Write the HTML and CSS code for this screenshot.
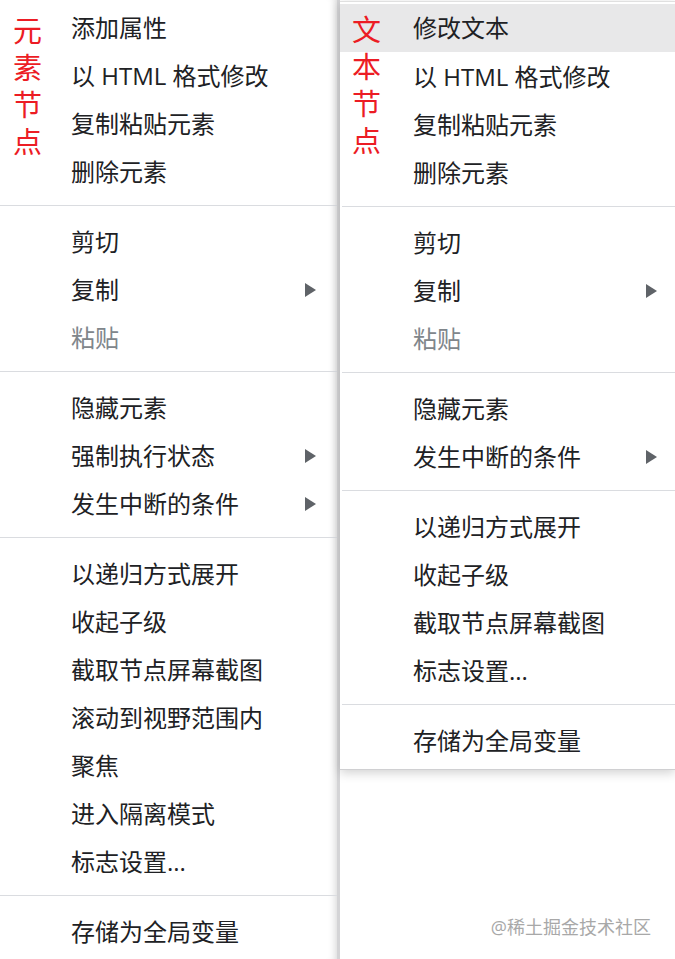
FILE: index.html
```html
<!DOCTYPE html>
<html lang="zh-CN">
<head>
    <meta charset="UTF-8">
    <title>右键菜单对比</title>
    <link rel="stylesheet" href="styles.css">
</head>
<body>
    <div class="page">
        <div class="panel left">
            <div class="note">元<br>素<br>节<br>点</div>
            <ul class="menu">
                <li class="item">添加属性</li>
                <li class="item">以 HTML 格式修改</li>
                <li class="item">复制粘贴元素</li>
                <li class="item">删除元素</li>
                <li class="sep"></li>
                <li class="item">剪切</li>
                <li class="item sub">复制</li>
                <li class="item off">粘贴</li>
                <li class="sep"></li>
                <li class="item">隐藏元素</li>
                <li class="item sub">强制执行状态</li>
                <li class="item sub">发生中断的条件</li>
                <li class="sep"></li>
                <li class="item">以递归方式展开</li>
                <li class="item">收起子级</li>
                <li class="item">截取节点屏幕截图</li>
                <li class="item">滚动到视野范围内</li>
                <li class="item">聚焦</li>
                <li class="item">进入隔离模式</li>
                <li class="item">标志设置...</li>
                <li class="sep"></li>
                <li class="item">存储为全局变量</li>
            </ul>
        </div>

        <div class="panel right">
            <div class="popup">
                <div class="note">文<br>本<br>节<br>点</div>
                <ul class="menu">
                    <li class="item hover">修改文本</li>
                    <li class="item">以 HTML 格式修改</li>
                    <li class="item">复制粘贴元素</li>
                    <li class="item">删除元素</li>
                    <li class="sep"></li>
                    <li class="item">剪切</li>
                    <li class="item sub">复制</li>
                    <li class="item off">粘贴</li>
                    <li class="sep"></li>
                    <li class="item">隐藏元素</li>
                    <li class="item sub">发生中断的条件</li>
                    <li class="sep"></li>
                    <li class="item">以递归方式展开</li>
                    <li class="item">收起子级</li>
                    <li class="item">截取节点屏幕截图</li>
                    <li class="item">标志设置...</li>
                    <li class="sep"></li>
                    <li class="item">存储为全局变量</li>
                </ul>
            </div>
            <div class="mark">@稀土掘金技术社区</div>
        </div>
    </div>
</body>
</html>
```

FILE: styles.css
```css
:root {
    --text: #202124;
    --muted: #80868b;
    --line: #dadce0;
    --red: #ec1c24;
}

body {
    margin: 0;
    background: #fff;
    font-family: "Open Sans", "Noto Sans CJK SC", sans-serif;
    color: var(--text);
}

.page {
    display: flex;
    width: 675px;
    height: 959px;
    overflow: hidden;
}

.panel {
    position: relative;
}

.panel.left {
    width: 340px;
    flex: none;
    padding-top: 4px;
    box-sizing: border-box;
    border-right: 3px solid #d4d4d6;
    box-shadow: inset -9px 0 8px -8px rgba(0, 0, 0, 0.18);
}

.panel.right {
    flex: 1;
    padding-top: 1px;
}

.menu {
    list-style: none;
    margin: 0;
    padding: 0;
}

.item {
    height: 48px;
    line-height: 48px;
    font-size: 24px;
    padding-left: 71px;
    padding-right: 21px;
    display: flex;
    align-items: center;
    justify-content: space-between;
    white-space: nowrap;
}

.item.off {
    color: var(--muted);
}

.item.sub::after {
    content: '';
    width: 0;
    height: 0;
    border-top: 7px solid transparent;
    border-bottom: 7px solid transparent;
    border-left: 11px solid #5f6368;
}

.sep {
    height: 1px;
    background: var(--line);
    margin: 9px 0 12px;
}

.popup {
    position: relative;
    background: #fff;
    border-top: 1px solid #e0e0e0;
    border-bottom: 1px solid #d0d0d2;
    padding: 2px 0 4px;
    box-shadow: 0 3px 10px rgba(0, 0, 0, 0.18);
}

.popup .item {
    padding-left: 73px;
    padding-right: 18px;
}

.popup .item.hover {
    margin-bottom: 1px;
}

.popup .sep {
    margin-left: 2px;
}

.item.hover {
    background: #e8e8e9;
}

.note {
    position: absolute;
    top: 12px;
    left: 13px;
    font-size: 29px;
    line-height: 37px;
    color: var(--red);
    z-index: 2;
}

.popup .note {
    top: 9px;
    left: 12px;
}

.mark {
    position: absolute;
    right: 24px;
    bottom: 20px;
    font-size: 18px;
    color: #a8a8a8;
    text-shadow: 0 0 2px #fff;
}
```
